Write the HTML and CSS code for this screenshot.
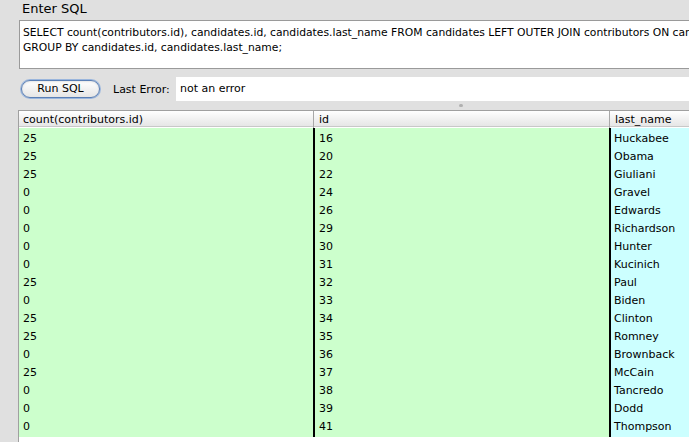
FILE: index.html
```html
<!DOCTYPE html>
<html>
<head>
<meta charset="utf-8">
<link rel="stylesheet" href="styles.css">
</head>
<body>
<div class="window">
  <div class="title">Enter SQL</div>
  <div class="sql">SELECT count(contributors.id), candidates.id, candidates.last_name FROM candidates LEFT OUTER JOIN contributors ON candidates.id = contributors.candidate_id<br>GROUP BY candidates.id, candidates.last_name;</div>
  <div class="toolbar">
    <button class="run">Run SQL</button>
    <span class="label">Last Error:</span>
    <div class="error">not an error</div>
  </div>
  <div class="splitter"><span class="dot"></span></div>
  <div class="table">
    <div class="head"><div class="h c1">count(contributors.id)</div><div class="h c2">id</div><div class="h c3">last_name</div></div>
    <div class="row"><div class="c1">25</div><div class="c2">16</div><div class="c3">Huckabee</div></div>
    <div class="row"><div class="c1">25</div><div class="c2">20</div><div class="c3">Obama</div></div>
    <div class="row"><div class="c1">25</div><div class="c2">22</div><div class="c3">Giuliani</div></div>
    <div class="row"><div class="c1">0</div><div class="c2">24</div><div class="c3">Gravel</div></div>
    <div class="row"><div class="c1">0</div><div class="c2">26</div><div class="c3">Edwards</div></div>
    <div class="row"><div class="c1">0</div><div class="c2">29</div><div class="c3">Richardson</div></div>
    <div class="row"><div class="c1">0</div><div class="c2">30</div><div class="c3">Hunter</div></div>
    <div class="row"><div class="c1">0</div><div class="c2">31</div><div class="c3">Kucinich</div></div>
    <div class="row"><div class="c1">25</div><div class="c2">32</div><div class="c3">Paul</div></div>
    <div class="row"><div class="c1">0</div><div class="c2">33</div><div class="c3">Biden</div></div>
    <div class="row"><div class="c1">25</div><div class="c2">34</div><div class="c3">Clinton</div></div>
    <div class="row"><div class="c1">25</div><div class="c2">35</div><div class="c3">Romney</div></div>
    <div class="row"><div class="c1">0</div><div class="c2">36</div><div class="c3">Brownback</div></div>
    <div class="row"><div class="c1">25</div><div class="c2">37</div><div class="c3">McCain</div></div>
    <div class="row"><div class="c1">0</div><div class="c2">38</div><div class="c3">Tancredo</div></div>
    <div class="row"><div class="c1">0</div><div class="c2">39</div><div class="c3">Dodd</div></div>
    <div class="row"><div class="c1">0</div><div class="c2">41</div><div class="c3">Thompson</div></div>
  </div>
</div>
</body>
</html>
```

FILE: styles.css
```css
html, body { margin: 0; padding: 0; }
body {
  width: 689px; height: 442px; overflow: hidden;
  background: #e0e0e0;
  font-family: "DejaVu Sans", sans-serif;
  font-size: 11px;
  color: #000;
}
.window { display: flex; flex-direction: column; }
.title {
  font-size: 13px;
  padding: 1px 0 0 22px;
  height: 20px;
  box-sizing: border-box;
  line-height: 16px;
}
.sql {
  margin-left: 19px;
  background: #fff;
  border: 1px solid #9a9a9a;
  border-right: none;
  padding: 4px 0 0 3px;
  font-size: 10.75px;
  line-height: 15px;
  white-space: nowrap;
  overflow: hidden;
  box-sizing: border-box;
  height: 49px;
}
.toolbar {
  display: flex; align-items: center;
  margin-top: 8px;
  height: 24px;
  padding-left: 21px;
}
.run {
  width: 79px; height: 18px;
  border-radius: 9px;
  border: 1px solid #5a7fb5;
  box-shadow: 0 0 0 1px #9ab6dd, inset 0 1px 2px rgba(0,0,0,0.1);
  background: linear-gradient(#ffffff, #f2f2f2 50%, #e6e6e6);
  font-family: inherit; font-size: 11px;
  padding: 0; line-height: 14px;
  color: #000;
}
.label { margin-left: 13px; width: 63px; }
.error {
  flex: 1;
  height: 24px; box-sizing: border-box;
  background: #fff;
  padding: 5px 0 0 4px;
}
.splitter { height: 9px; position: relative; }
.dot {
  position: absolute; left: 459px; top: 3px;
  width: 4px; height: 3px; border-radius: 2px; background: #b0b0b0;
}
.table {
  margin-left: 18px;
  border-left: 1px solid #a0a0a0;
  border-top: 1px solid #a0a0a0;
  background: #fff;
  height: 340px;
}
.head, .row {
  display: grid;
  grid-template-columns: 294px 296px 1fr;
}
.head {
  height: 15px;
  background: linear-gradient(#ffffff, #f2f2f2 50%, #e6e6e6);
  border-bottom: 1px solid #c8c8c8;
  line-height: 17px;
}
.head .h { padding-left: 4px; }
.head .c2, .head .c3 { border-left: 1px solid #a8a8a8; padding-left: 5px; }
.row {
  height: 17px;
  margin-top: 1px;
  line-height: 21px;
}
.row .c1 { background: #ccffcc; padding-left: 4px; }
.row .c2 { background: #ccffcc; border-left: 2px solid #000; padding-left: 4px; }
.row .c3 { background: #ccffff; border-left: 2px solid #000; padding-left: 3px; }
```
